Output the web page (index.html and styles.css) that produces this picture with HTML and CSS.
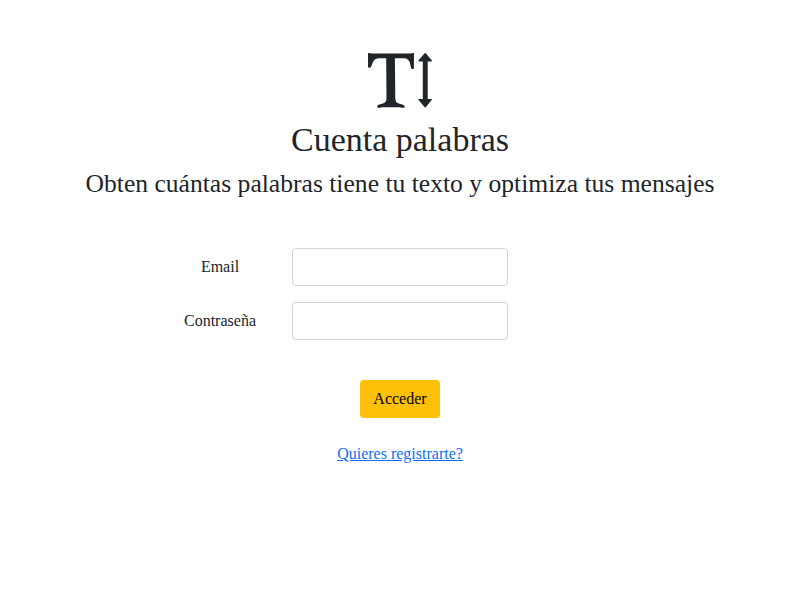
FILE: index.html
```html
<!DOCTYPE html>
<html lang="es">
<head>
<meta charset="utf-8">
<title>Cuenta palabras</title>
<link rel="stylesheet" href="styles.css">
</head>
<body>
<main class="page">
  <header class="header">
    <svg class="logo" viewBox="0 0 66 58" aria-hidden="true">
      <path d="M1 1.200Q2.500 .500 4.500 1.400L43.500 1.400Q45.500 .500 47 1.200L46.900 16.500Q45.500 17.700 44.200 16.500L42.800 10.500Q41.500 6.500 37 6.300L27.900 6.300L28.300 47Q28.300 50 31 51.200L36 52.700Q38.500 54 37.300 55.800Q35 56 33 55.300L15 55.300Q13 56 10.800 55.800Q9.300 54 11.500 52.800L16 51.500Q19.300 50 19.500 47L19.200 6.300L12 6.300Q7.500 6.500 6 10L4 15Q2.500 16.500 1 15.200Z"/>
      <path class="arrow" d="M58.200 1.700L64.200 8.800L60 8.800L60 47.600L64.200 47.600L58.200 54.700L52.100 47.600L56.500 47.600L56.500 8.800L52.100 8.800Z"/>
    </svg>
    <h1 class="title">Cuenta palabras</h1>
    <h2 class="subtitle">Obten cuántas palabras tiene tu texto y optimiza tus mensajes</h2>
  </header>
  <form class="form">
    <div class="row"><label class="label" for="email">Email</label><input class="input" id="email" type="email"></div>
    <div class="row"><label class="label" for="password">Contraseña</label><input class="input" id="password" type="password"></div>
    <button class="button" type="submit">Acceder</button>
    <a class="link" href="#">Quieres registrarte?</a>
  </form>
</main>
</body>
</html>
```
FILE: styles.css
```css
* { box-sizing: border-box; }
body {
  margin: 0;
  background: #fff;
  color: #212529;
  font-family: "Liberation Serif", serif;
  font-size: 16px;
  line-height: 24px;
}
.page { padding-top: 52px; }
.header, .form { display: flex; flex-direction: column; align-items: center; }
.logo { width: 66px; height: 58px; fill: #212529; }
.arrow { stroke: #212529; stroke-width: 1.4px; stroke-linejoin: round; }
.title { margin: 9px 0 8px; font-size: 34px; font-weight: 400; line-height: 41px; }
.subtitle { margin: 0; font-size: 25.6px; font-weight: 400; line-height: 31px; }
.form { padding-top: 49px; }
.row { display: grid; grid-template-columns: 120px 216px; column-gap: 12px; align-items: center; width: 480px; margin-bottom: 16px; }
.label { text-align: center; }
.input { width: 216px; height: 38px; padding: 6px 12px; border: 1px solid #ced4da; border-radius: 4px; background: #fff; font: inherit; }
.button { width: 80px; height: 38px; margin-top: 24px; padding: 0; border: 0; border-radius: 4px; background: #ffc107; color: #000; font: inherit; }
.link { margin-top: 24px; color: #0d6efd; }
```
